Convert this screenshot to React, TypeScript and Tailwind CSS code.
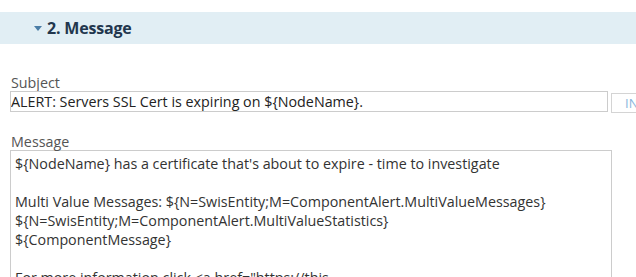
import React from "react";

const messageText = `\${NodeName} has a certificate that's about to expire - time to investigate

Multi Value Messages: \${N=SwisEntity;M=ComponentAlert.MultiValueMessages}
\${N=SwisEntity;M=ComponentAlert.MultiValueStatistics}
\${ComponentMessage}

For more information click <a href="https://this`;

export default function App() {
  return (
    <div className="w-[636px] h-[277px] overflow-hidden bg-white font-['Open_Sans',sans-serif]">
      {/* section header */}
      <div className="mt-3 h-8 bg-[#e1eef4] flex items-center pl-[34px]">
        <span className="w-0 h-0 border-l-[4px] border-r-[4px] border-t-[5px] border-l-transparent border-r-transparent border-t-[#4a7da6] mr-[5px] mt-[1px]" />
        <span className="text-[16px] font-bold text-[#22364d] tracking-[-0.2px]">2. Message</span>
      </div>

      <div className="pl-[10px] pt-[29px]">
        <div className="text-[14.3px] leading-[19px] text-[#555] pl-[1px]">Subject</div>
        <div className="flex items-start gap-[3px] mt-[-1px]">
          <div className="w-[598px] shrink-0 h-[21px] border border-[#ccc] text-[14.3px] leading-[20px] text-[#222] whitespace-nowrap overflow-hidden">
            ALERT: Servers SSL Cert is expiring on {"${NodeName}"}.
          </div>
          <button className="shrink-0 mt-[2px] h-[20px] border border-[#d4d4d4] bg-white px-[13px] text-[13px] leading-[18px] text-[#8ab6dc] whitespace-nowrap">
            INSERT VARIABLE
          </button>
        </div>

        <div className="mt-[19px] text-[14.3px] leading-[19px] text-[#555] pl-[1px]">Message</div>
        <div className="mt-[-1px] w-[602px] h-[200px] border border-[#ccc] px-[4px] pt-[3px] text-[14.3px] leading-[19px] text-[#333] whitespace-pre-wrap">
          {messageText}
        </div>
      </div>
    </div>
  );
}
